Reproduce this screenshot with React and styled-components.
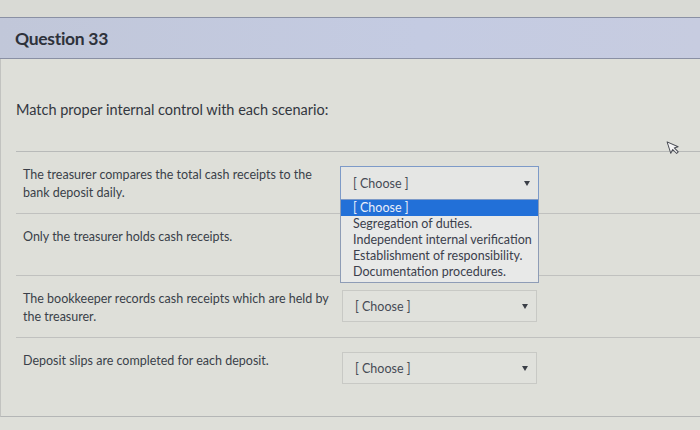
import React from "react";
import styled, { createGlobalStyle } from "styled-components";

const GlobalStyle = createGlobalStyle`
  html, body {
    margin: 0;
    padding: 0;
    background: #dedfd9;
  }
  body {
    font-family: Lato, "Open Sans", sans-serif;
    color: #363b45;
  }
`;

const Page = styled.div`
  width: 700px;
  height: 430px;
  overflow: hidden;
  position: relative;
  background: #dedfd9;
`;

const TopStrip = styled.div`
  height: 17px;
  background: #d9dad5;
`;

const Header = styled.div`
  height: 40px;
  display: flex;
  align-items: center;
  padding-left: 15px;
  background: linear-gradient(90deg, #c1c7d9 0%, #c4cbe2 60%, #c7cce0 100%);
  border-top: 1px solid #8a90a4;
  border-bottom: 1px solid #8a90a4;
`;

const HeaderTitle = styled.h2`
  margin: 0;
  font-size: 17.5px;
  font-weight: 700;
  color: #2e323b;
  letter-spacing: -0.3px;
`;

const Body = styled.div`
  padding: 42px 0 16px 15px;
  border-left: 1px solid #c2c3c0;
  border-bottom: 1px solid #b4b6b6;
`;

const Prompt = styled.p`
  margin: 0 0 33px 0;
  font-size: 14.5px;
  color: #33373f;
`;

const Table = styled.div`
  border-top: 1px solid #b8bab9;
`;

const Row = styled.div`
  display: grid;
  grid-template-columns: 310px 200px;
  column-gap: 7px;
  align-items: start;
  height: 62px;
  box-sizing: border-box;
  padding: 14px 0 0 7px;
  border-bottom: ${(p) => (p.last ? "none" : "1px solid #c0c1bf")};
`;

const Scenario = styled.div`
  font-size: 12.5px;
  line-height: 18px;
  color: #3a3f49;
`;

const SelectWrap = styled.div`
  position: relative;
  width: ${(p) => (p.open ? "199px" : "195px")};
  margin-left: ${(p) => (p.open ? "0" : "2px")};
`;

const SelectBox = styled.div`
  height: ${(p) => (p.open ? "34px" : "32px")};
  box-sizing: border-box;
  display: flex;
  align-items: center;
  justify-content: space-between;
  padding: 0 8px 0 12px;
  background: ${(p) => (p.open ? "#e5e6e4" : "#e0e1dc")};
  border: 1px solid ${(p) => (p.open ? "#7d9ac8" : "#c8c9c5")};
  font-size: 12.5px;
  color: #464b55;
`;

const Caret = styled.span`
  width: 0;
  height: 0;
  border-left: 3px solid transparent;
  border-right: 3px solid transparent;
  border-top: 5px solid #3b3f47;
`;

const OptionList = styled.div`
  position: absolute;
  top: 34px;
  left: 0;
  right: 0;
  z-index: 2;
  background: #e8e9e8;
  border: 1px solid #8e9cb6;
  border-top: none;
  padding-bottom: 2px;
`;

const Option = styled.div`
  height: 16px;
  line-height: 16px;
  padding-left: 12px;
  font-size: 12.5px;
  white-space: nowrap;
  color: ${(p) => (p.active ? "#e9eefa" : "#3b404c")};
  background: ${(p) => (p.active ? "#2270d8" : "transparent")};
`;

const Cursor = styled.svg`
  position: absolute;
  left: 668px;
  top: 139px;
  transform: rotate(-18deg);
`;

const options = [
  "[ Choose ]",
  "Segregation of duties.",
  "Independent internal verification",
  "Establishment of responsibility.",
  "Documentation procedures.",
];

const scenarios = [
  "The treasurer compares the total cash receipts to the bank deposit daily.",
  "Only the treasurer holds cash receipts.",
  "The bookkeeper records cash receipts which are held by the treasurer.",
  "Deposit slips are completed for each deposit.",
];

function Select({ open }) {
  return (
    <SelectWrap open={open}>
      <SelectBox open={open}>
        <span>[ Choose ]</span>
        <Caret />
      </SelectBox>
      {open && (
        <OptionList>
          {options.map((o, i) => (
            <Option key={o} active={i === 0}>
              {o}
            </Option>
          ))}
        </OptionList>
      )}
    </SelectWrap>
  );
}

export default function App() {
  return (
    <>
      <GlobalStyle />
      <Page>
        <TopStrip />
        <Header>
          <HeaderTitle>Question 33</HeaderTitle>
        </Header>
        <Body>
          <Prompt>Match proper internal control with each scenario:</Prompt>
          <Table>
            {scenarios.map((s, i) => (
              <Row key={s} last={i === scenarios.length - 1}>
                <Scenario>{s}</Scenario>
                {i !== 1 && <Select open={i === 0} />}
              </Row>
            ))}
          </Table>
        </Body>
        <Cursor width="12" height="16" viewBox="0 0 12 16">
          <path
            d="M1 1 L1 13 L4 10 L6.5 15 L8.5 14 L6 9 L10 9 Z"
            fill="#f4f4f4"
            stroke="#4a4d55"
            strokeWidth="1"
            strokeLinejoin="round"
          />
        </Cursor>
      </Page>
    </>
  );
}
